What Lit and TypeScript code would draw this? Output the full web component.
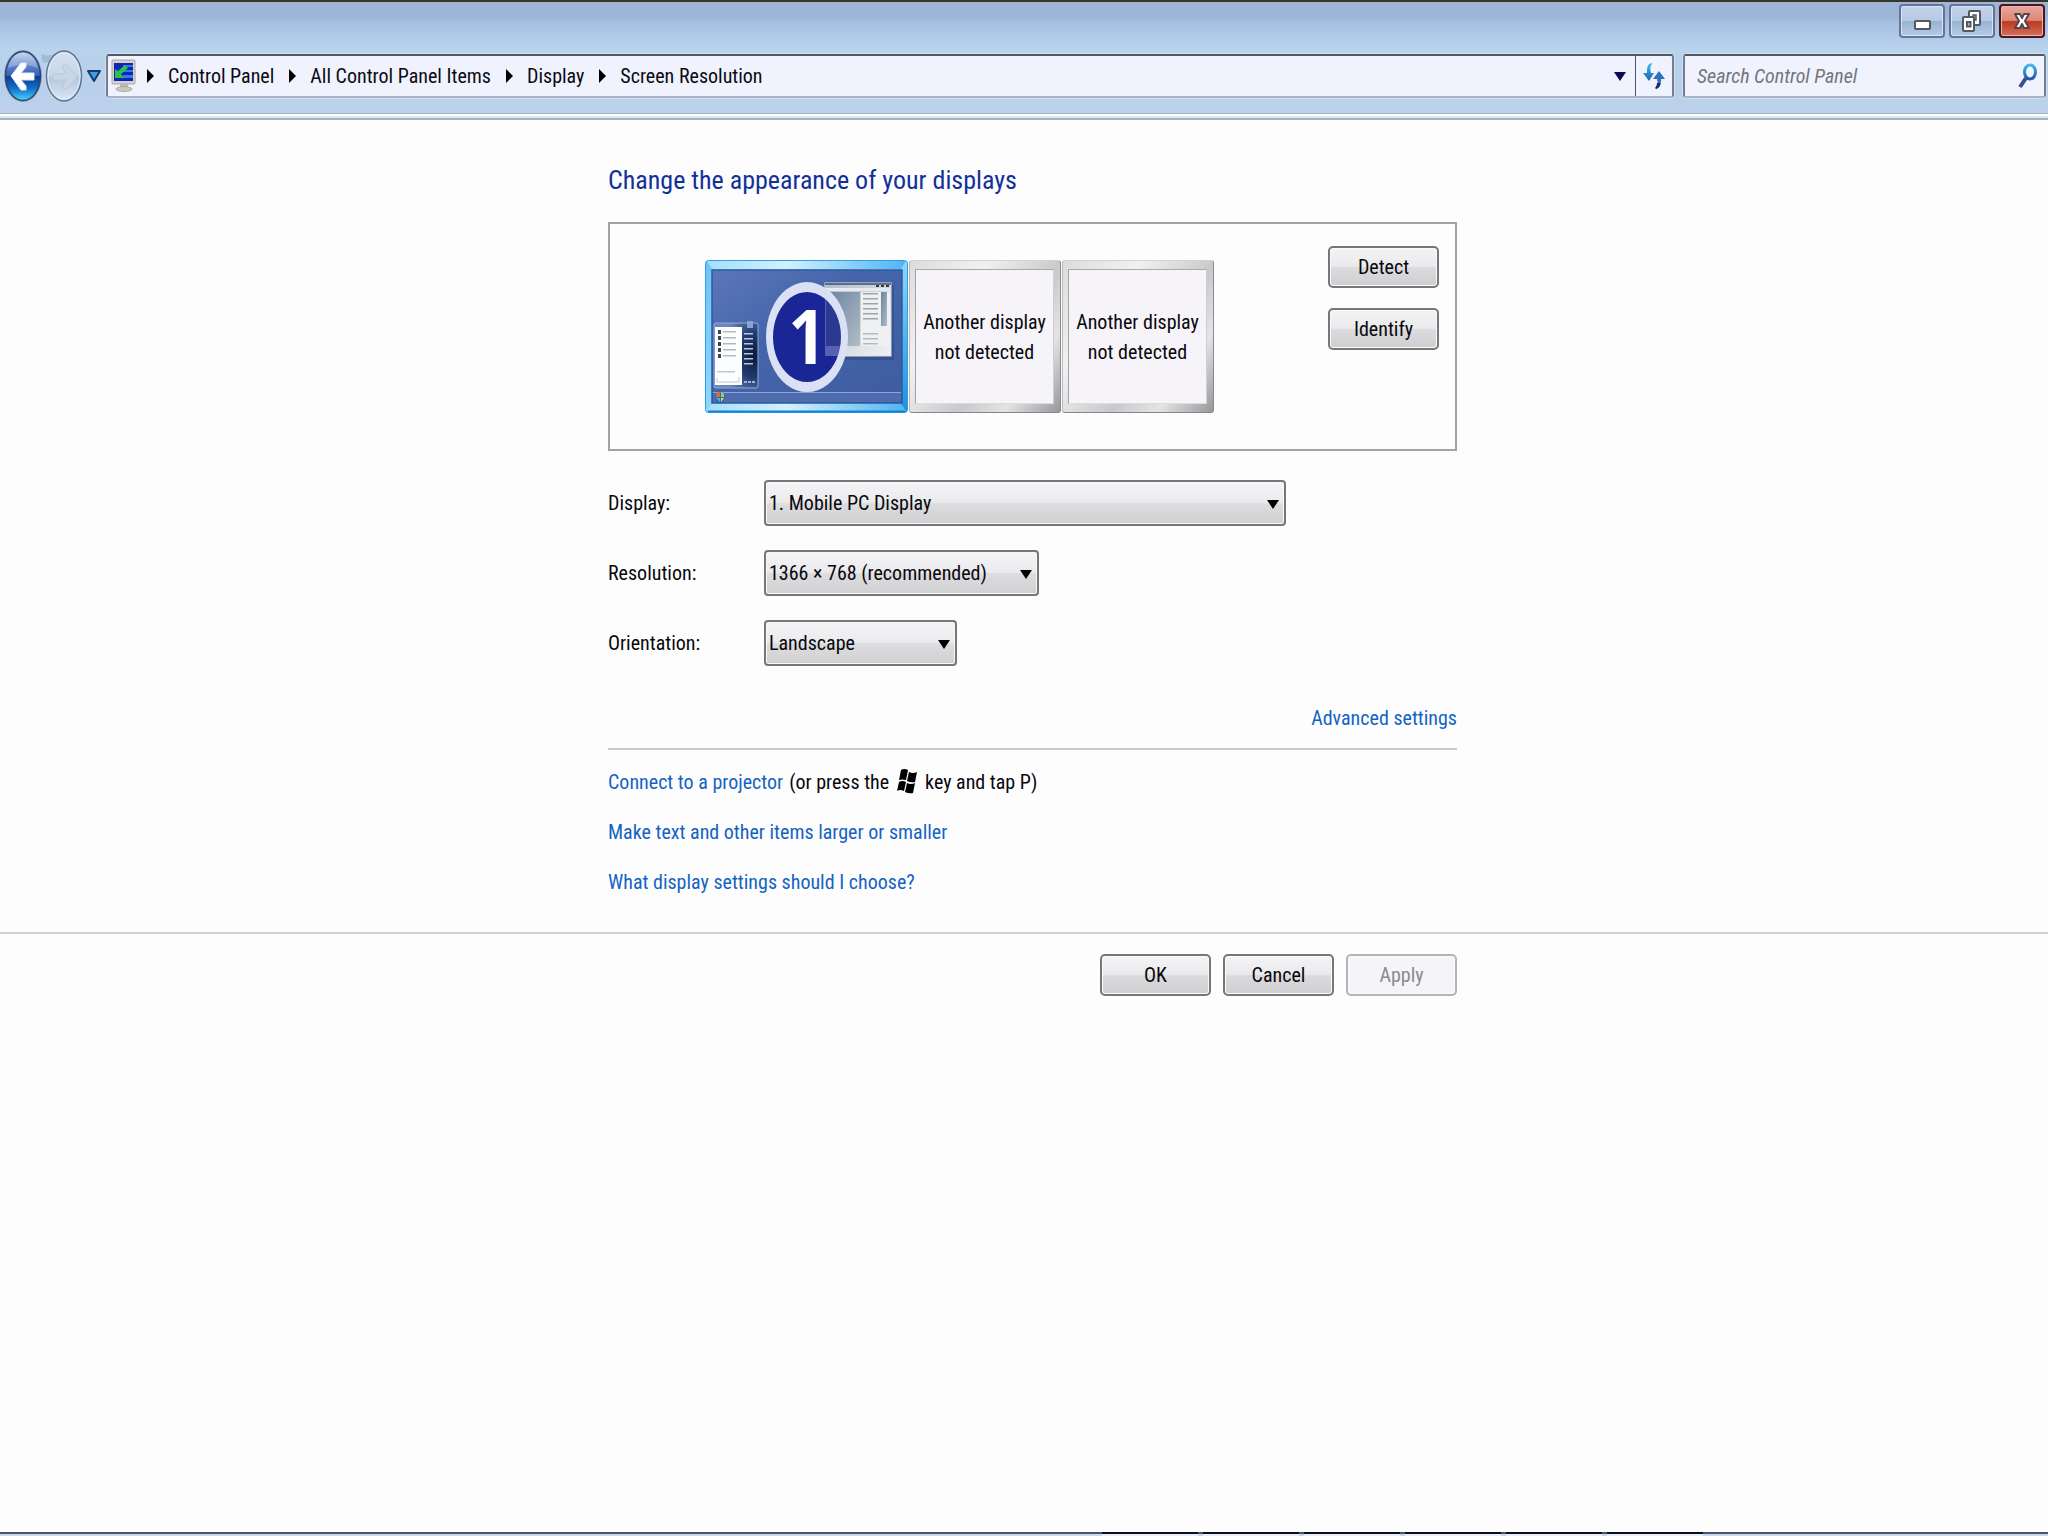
import { LitElement, html, css, svg } from "lit";
import { customElement } from "lit/decorators.js";

interface Choice {
  id: string;
  label: string;
  size: string;
  options: string[];
}

const CRUMBS = ["Control Panel", "All Control Panel Items", "Display", "Screen Resolution"];

const CHOICES: Choice[] = [
  { id: "display", label: "Display:", size: "wide", options: ["1. Mobile PC Display"] },
  { id: "resolution", label: "Resolution:", size: "medium", options: ["1366 × 768 (recommended)"] },
  { id: "orientation", label: "Orientation:", size: "small", options: ["Landscape"] },
];

const TASKS = [1, 2, 3, 4, 5, 6];

const base = css`
  * {
    box-sizing: border-box;
  }
  button,
  input,
  select {
    margin: 0;
    font: inherit;
    color: inherit;
  }
  svg {
    display: block;
  }
`;

@customElement("window-header")
export class WindowHeader extends LitElement {
  static styles = [
    base,
    css`
      :host {
        display: block;
      }
      .frame {
        border-top: 2px solid #36362c;
        border-bottom: 1px solid #a4b2ce;
        background: linear-gradient(#9fb6d7 0, #9cb4d5 14px, #a6bfe1 20px, #b9d3ed 46px, #b9cfea 80px, #bdd1ed 110px);
      }
      .caption {
        display: flex;
        justify-content: flex-end;
        gap: 4px;
        padding: 2px 3px 0 0;
      }
      .cap {
        display: grid;
        place-items: center;
        width: 46px;
        height: 34px;
        padding: 0;
        border: 2px solid #64759b;
        border-radius: 4px;
        background: linear-gradient(#c3d3ea 0, #b6cae5 48%, #98b2d2 52%, #b4cde8 100%);
        box-shadow: inset 0 0 0 1px #d8e4f3;
      }
      .cap.close {
        border-color: #4c1520;
        background: linear-gradient(#e8a79d 0, #dc8677 48%, #bb3a20 52%, #d4705a 100%);
        box-shadow: inset 0 0 0 1px #ecb5ab;
      }
      .nav {
        display: flex;
        align-items: center;
        padding: 11px 2px 10px 3px;
      }
      .travel {
        display: flex;
        align-items: center;
        margin-right: 5px;
      }
      .travel button {
        padding: 0;
        border: 0;
        background: none;
      }
      .travel .back {
        margin-right: -2px;
      }
      .travel .recent {
        margin-left: 4px;
      }
      .field {
        display: flex;
        align-items: stretch;
        height: 44px;
        border: 2px solid #757d91;
        border-top-color: #525766;
        border-bottom-color: #aab3c8;
        border-radius: 3px;
        background: #f0f3fd;
        box-shadow: 0 0 0 1px #cfdef1;
      }
      .address {
        flex: 1;
        min-width: 0;
        margin-right: 9px;
      }
      .crumbs {
        display: flex;
        flex: 1;
        align-items: center;
        padding-left: 3px;
        font-size: 20px;
        line-height: 24px;
        white-space: nowrap;
      }
      .crumbs a {
        color: #0a0a14;
        text-decoration: none;
      }
      .sep {
        margin: 0 14px 0 15px;
      }
      .place + .sep {
        margin-left: 11px;
      }
      .drop,
      .refresh {
        display: grid;
        place-items: center;
        padding: 0;
        border: 0;
        background: none;
      }
      .drop {
        width: 30px;
      }
      .refresh {
        width: 37px;
        border-left: 1px solid #4f5566;
      }
      .search {
        width: 363px;
        align-items: center;
      }
      .search input {
        flex: 1;
        min-width: 0;
        height: 100%;
        padding: 0 0 0 12px;
        border: 0;
        outline: 0;
        background: none;
        font-size: 20px;
      }
      .search input::placeholder {
        color: #73757d;
        font-style: italic;
        opacity: 1;
      }
      .go {
        padding: 0 6px 0 0;
        border: 0;
        background: none;
      }
      .edge {
        height: 6px;
        border-top: 2px solid #fff;
        border-bottom: 2px solid #a5b2c4;
        background: #d9e7f1;
      }
    `,
  ];

  private minimizeIcon() {
    return svg`<svg width="20" height="20" viewBox="0 0 20 20" aria-hidden="true">
      <rect x="3" y="10" width="15" height="8" rx="1" fill="#fff" stroke="#545861" stroke-width="2"/></svg>`;
  }

  private restoreIcon() {
    return svg`<svg width="22" height="24" viewBox="0 0 22 24" aria-hidden="true">
      <rect x="8" y="2" width="11" height="14" rx="1" fill="#fff" stroke="#545861" stroke-width="2"/>
      <rect x="12" y="6" width="3" height="5" fill="#a5bbd8" stroke="#545861" stroke-width="1.5"/>
      <rect x="2" y="8" width="11" height="14" rx="1" fill="#fff" stroke="#545861" stroke-width="2"/>
      <rect x="6" y="13" width="3.500" height="4.500" fill="#a5bbd8" stroke="#545861" stroke-width="2"/></svg>`;
  }

  private closeIcon() {
    return svg`<svg width="20" height="22" viewBox="0 0 20 22" aria-hidden="true">
      <path d="M3 4h5l2 4 2-4h5l-4 7 4 7h-5l-2-4-2 4H3l4-7z" fill="#fff" stroke="#58444c" stroke-width="2" stroke-linejoin="round"/></svg>`;
  }

  private backIcon() {
    return svg`<svg width="40" height="54" viewBox="0 0 40 54" aria-hidden="true">
      <defs>
        <linearGradient id="b1" x1="0" y1="0" x2="0" y2="1">
          <stop offset="0" stop-color="#b9cdec"/><stop offset=".2" stop-color="#6f93d2"/>
          <stop offset=".49" stop-color="#3460b5"/><stop offset=".51" stop-color="#0c3a93"/>
          <stop offset=".75" stop-color="#0f6fc9"/><stop offset="1" stop-color="#4fd3fb"/>
        </linearGradient>
      </defs>
      <ellipse cx="20" cy="27" rx="19" ry="26" fill="#8ea4c2"/>
      <ellipse cx="20" cy="27" rx="17.500" ry="24.500" fill="url(#b1)" stroke="#2b4672" stroke-width="1.500"/>
      <path d="M5 19C8 7 14 4 20 4s12 3 15 15c-9-4-21-4-30 0z" fill="#fff" opacity=".28"/>
      <path d="M8 27L18 14h5v4l-5 6h13v7H18l5 6v4h-5z" fill="#fff" stroke="#dfe9f7" stroke-width="1"/></svg>`;
  }

  private forwardIcon() {
    return svg`<svg width="42" height="54" viewBox="0 0 42 54" aria-hidden="true">
      <defs>
        <linearGradient id="f1" x1="0" y1="0" x2="0" y2="1">
          <stop offset="0" stop-color="#d3e0f0"/><stop offset=".48" stop-color="#c9d8ea"/>
          <stop offset=".54" stop-color="#b3c7de"/><stop offset="1" stop-color="#d9e8f6"/>
        </linearGradient>
      </defs>
      <path d="M0 5q6 3 14 0v6q-6 3-12 3z" fill="#a3b9d6"/>
      <ellipse cx="23" cy="27" rx="17.500" ry="25" fill="url(#f1)" stroke="#5f738f" stroke-width="1.500"/>
      <ellipse cx="23" cy="27" rx="16" ry="23" fill="none" stroke="#e4eef8" stroke-width="1"/>
      <path d="M36 28L26 16h-4v4l4 5H12v6h14l-4 5v4h4z" fill="#cbd6e4" stroke="#bac8da" stroke-width="1"/></svg>`;
  }

  private displayIcon() {
    return svg`<svg class="place" width="25" height="34" viewBox="0 0 25 34" aria-hidden="true">
      <rect x="1" y="1" width="23" height="24" rx="1" fill="#d5d2cc" stroke="#aaa79f"/>
      <rect x="3" y="4" width="19" height="18" fill="#1026b8"/>
      <path d="M12 6h10v2H12zM10 11h12v2H10zM12 16h10v3H12z" fill="#2f7be8"/>
      <path d="M14 6l3 3-7 6 3 4H4V10l3 2z" fill="#2fc24a"/>
      <path d="M9 25h8v4h-8z" fill="#bdbab2"/><ellipse cx="13" cy="30" rx="8" ry="2.500" fill="#c9c6be" stroke="#a09d95" stroke-width=".7"/></svg>`;
  }

  private arrow() {
    return svg`<svg class="sep" width="7" height="14" viewBox="0 0 7 14" aria-hidden="true"><path d="M0 0l7 7-7 7z" fill="#000"/></svg>`;
  }

  render() {
    return html`
      <header>
        <div class="frame">
          <div class="caption">
            <button class="cap" type="button" aria-label="Minimize">${this.minimizeIcon()}</button>
            <button class="cap" type="button" aria-label="Restore">${this.restoreIcon()}</button>
            <button class="cap close" type="button" aria-label="Close">${this.closeIcon()}</button>
          </div>
          <div class="nav">
            <div class="travel">
              <button class="back" type="button" aria-label="Back">${this.backIcon()}</button>
              <button type="button" aria-label="Forward">${this.forwardIcon()}</button>
              <button class="recent" type="button" aria-label="Recent pages">
                <svg width="14" height="13" viewBox="0 0 14 13" aria-hidden="true">
                  <path d="M1 1h12L7 11z" fill="#3fa0dc" stroke="#153a70" stroke-width="2" stroke-linejoin="round" />
                </svg>
              </button>
            </div>
            <div class="field address">
              <nav class="crumbs" aria-label="Address">
                ${this.displayIcon()}
                ${CRUMBS.map((name) => html`${this.arrow()}<a href="#">${name}</a>`)}
              </nav>
              <button class="drop" type="button" aria-label="Previous locations">
                <svg width="12" height="9" viewBox="0 0 12 9" aria-hidden="true"><path d="M0 0h12L6 9z" fill="#0a0a55" /></svg>
              </button>
              <button class="refresh" type="button" aria-label="Refresh">
                <svg width="22" height="28" viewBox="0 0 22 28" aria-hidden="true">
                  <defs>
                    <linearGradient id="r1" x1="0" y1="0" x2="0" y2="1">
                      <stop offset="0" stop-color="#35c3ee" /><stop offset="1" stop-color="#2660ae" />
                    </linearGradient>
                  </defs>
                  <path d="M9 1C4 2 4 6 4 11H0l6 8 5-8H8C7 7 7 4 9 2z" fill="url(#r1)" />
                  <path d="M13 27c4-1 5-4 5-10h4l-6-8-6 8h4c1 4 1 7-1 9z" fill="#2f70ba" />
                  <path d="M13 27c3-1 4-3 4.500-6H14c0 2-1 4-2 5z" fill="#1b2766" />
                </svg>
              </button>
            </div>
            <div class="field search">
              <input type="text" aria-label="Search Control Panel" placeholder="Search Control Panel" />
              <button class="go" type="button" aria-label="Search">
                <svg width="20" height="28" viewBox="0 0 20 28" aria-hidden="true">
                  <defs>
                    <linearGradient id="s1" x1="0" y1="0" x2="0" y2="1">
                      <stop offset="0" stop-color="#3db9e8" /><stop offset="1" stop-color="#2a55a8" />
                    </linearGradient>
                  </defs>
                  <path d="M8 16L2 25" stroke="#3a4f92" stroke-width="4" />
                  <ellipse cx="12" cy="10" rx="5.500" ry="7" fill="#edf5fd" stroke="url(#s1)" stroke-width="3" />
                </svg>
              </button>
            </div>
          </div>
        </div>
        <div class="edge"></div>
      </header>
    `;
  }
}

@customElement("display-preview")
export class DisplayPreview extends LitElement {
  static styles = [
    base,
    css`
      :host {
        display: block;
      }
      .stage {
        display: flex;
        justify-content: space-between;
        align-items: flex-start;
        min-height: 229px;
        padding: 22px 16px 36px 95px;
        border: 2px solid #a2a2a7;
      }
      .monitors {
        display: flex;
        align-items: flex-start;
        gap: 1px;
        padding-top: 14px;
      }
      .monitor {
        height: 153px;
        padding: 0;
        border-radius: 3px;
      }
      .primary {
        width: 203px;
        border: 0;
        background: none;
      }
      .missing {
        display: grid;
        width: 152px;
        padding: 8px 6px 8px 5px;
        border: 1px solid;
        border-color: #d2d2d3 #8a8a8c #858587 #b9b9bb;
        background: linear-gradient(125deg, #dcdcdd 0, #f1f1f2 30%, #c9c9cb 60%, #e4e4e5 78%, #98989b 100%);
      }
      .panel {
        display: grid;
        place-items: center;
        border: 1px solid;
        border-color: #a9a8ac #cfced2 #dddce0 #a3a2a6;
        background: #f6f4f9;
        font-size: 20px;
        line-height: 30px;
        text-align: center;
        white-space: nowrap;
      }
      .actions {
        display: flex;
        flex-direction: column;
        gap: 20px;
      }
    `,
  ];

  private screen() {
    const rows = [0, 1, 2, 3, 4];
    return svg`<svg width="203" height="153" viewBox="0 0 203 153" role="img" aria-label="Display 1">
      <defs>
        <linearGradient id="bz" x1="0" y1="0" x2="1" y2="1">
          <stop offset="0" stop-color="#6fc3f8"/><stop offset=".5" stop-color="#8ed6fd"/><stop offset="1" stop-color="#1a8fe0"/>
        </linearGradient>
        <linearGradient id="bt" x1="0" y1="0" x2="1" y2="0">
          <stop offset="0" stop-color="#a5defd"/><stop offset=".4" stop-color="#d3f0fe"/><stop offset="1" stop-color="#4fb4f3"/>
        </linearGradient>
        <linearGradient id="dk" x1="0" y1="0" x2="1" y2="1">
          <stop offset="0" stop-color="#5b77b8"/><stop offset=".4" stop-color="#4565ab"/><stop offset="1" stop-color="#3f5c9f"/>
        </linearGradient>
        <linearGradient id="wn" x1="0" y1="0" x2="1" y2="1">
          <stop offset="0" stop-color="#b2bccb"/><stop offset="1" stop-color="#f1f2f3"/>
        </linearGradient>
        <linearGradient id="pc" x1="0" y1="0" x2="1" y2="1">
          <stop offset="0" stop-color="#6b829f"/><stop offset="1" stop-color="#b1bdc6"/>
        </linearGradient>
        <radialGradient id="mn" cx=".9" cy=".5" r=".7">
          <stop offset="0" stop-color="#0c1836"/><stop offset=".5" stop-color="#213c73"/><stop offset="1" stop-color="#6b86bd"/>
        </radialGradient>
        <clipPath id="in"><ellipse cx="102" cy="77" rx="36" ry="47"/></clipPath>
      </defs>
      <rect x=".5" y=".5" width="202" height="152" rx="3" fill="url(#bz)" stroke="#2b9fe8"/>
      <path d="M2 1h199l-5 8H7z" fill="url(#bt)"/>
      <path d="M2 151h199l-5-8H7z" fill="url(#bt)"/>
      <path d="M3 151.500h197" stroke="#1583d2" stroke-width="2"/>
      <rect x="7" y="10" width="190" height="133" fill="url(#dk)" stroke="#2b5c9c" stroke-width="1.500"/>
      <path d="M8 133h188v9H8z" fill="#4f6cae"/><path d="M8 132.500h188" stroke="#90a5d0"/>
      <circle cx="15" cy="137.500" r="5" fill="#2c6fb0"/>
      <path d="M11 134l4-2v5h-4z" fill="#e0672e"/><path d="M16 132l3 2v3h-3z" fill="#9fd15b"/>
      <path d="M11 138h4v4z" fill="#4bb4e6"/><path d="M16 138h3l-3 4z" fill="#f4cf45"/>
      <rect x="9" y="63" width="44" height="65" rx="2" fill="url(#mn)" stroke="#93a9d4"/>
      <rect x="10" y="67" width="27" height="58" fill="#fcfdff"/>
      <rect x="42" y="61" width="6" height="7" fill="#8ca3cf"/>
      ${rows.map((i) => svg`<rect x="13" y="${70 + i * 6}" width="3" height="4" fill="#3d4450"/><rect x="18" y="${71 + i * 6}" width="13" height="1.500" fill="#b4b8be"/>`)}
      ${[0, 1, 2, 3, 4, 5, 6].map((i) => svg`<rect x="39" y="${73 + i * 5}" width="9" height="1.500" fill="#b9c6de"/>`)}
      <rect x="12" y="111" width="18" height="1.500" fill="#c5c7ca"/><path d="M12 118v4h22v-5" fill="none" stroke="#c5c7ca"/>
      <path d="M39 122h11" stroke="#a3b4d3" stroke-width="2" stroke-dasharray="3 1"/>
      <rect x="122" y="25" width="67" height="75" fill="#20386d" opacity=".35"/>
      <rect x="120" y="23" width="66" height="73" fill="url(#wn)" stroke="#dce1e9"/>
      <path d="M120 24h66" stroke="#3f4d66" stroke-width="1.500"/>
      <path d="M171 25h3v2h-3zM176 25h3v2h-3zM181 25h3v2h-3z" fill="#2f394c"/>
      <path d="M121 28h64v3h-64z" fill="#e7ebf1"/>
      <rect x="121" y="32" width="34" height="54" fill="url(#pc)"/>
      <rect x="156" y="32" width="29" height="54" fill="#eef0f2"/>
      ${[0, 1, 2, 3, 4, 5].map((i) => svg`<rect x="158" y="${33 + i * 5}" width="15" height="1.500" fill="#9ea3a9"/>`)}
      ${[0, 1, 2].map((i) => svg`<rect x="158" y="${73 + i * 5}" width="15" height="1.500" fill="#b6babf"/>`)}
      <rect x="176" y="32" width="6" height="34" fill="url(#pc)"/>
      <ellipse cx="102" cy="77" rx="35" ry="47" fill="#1b2696"/>
      <g clip-path="url(#in)" opacity=".3">
        <rect x="120" y="23" width="40" height="73" fill="#e6ecf6"/><rect x="121" y="32" width="34" height="54" fill="#55698a"/>
      </g>
      <path fill-rule="evenodd" d="M102 22a41 55 0 1 0 .01 0zM102 32a34 45 0 1 1-.01 0z" fill="#dbe1f4"/>
      <text x="101" y="104" text-anchor="middle" font-family="Open Sans Condensed, Roboto Condensed, sans-serif" font-weight="700" font-size="76" fill="#fff">1</text>
    </svg>`;
  }

  render() {
    return html`
      <section class="stage" aria-label="Detected displays">
        <div class="monitors">
          <button class="monitor primary" type="button">${this.screen()}</button>
          ${[0, 1].map(() => html`<div class="monitor missing"><div class="panel"><span>Another display<br />not detected</span></div></div>`)}
        </div>
        <div class="actions">
          <push-button label="Detect"></push-button>
          <push-button label="Identify"></push-button>
        </div>
      </section>
    `;
  }
}

@customElement("push-button")
export class PushButton extends LitElement {
  static properties = { label: { type: String }, disabled: { type: Boolean } };
  declare label: string;
  declare disabled: boolean;

  static styles = [
    base,
    css`
      :host {
        display: block;
      }
      .push {
        display: block;
        width: 111px;
        height: 42px;
        padding: 0;
        border: 2px solid #77777a;
        border-radius: 5px;
        background: linear-gradient(#f4f3f5 0, #eaeaec 48%, #dbdadc 52%, #cfced1 100%);
        box-shadow: inset 0 0 0 1px #fafafa;
        font-size: 20px;
        line-height: 24px;
        text-align: center;
      }
      .push:disabled {
        border-color: #b4b4b8;
        background: #f5f4f6;
        color: #8b8b8f;
      }
    `,
  ];

  render() {
    return html`<button class="push" type="button" ?disabled=${this.disabled}>${this.label}</button>`;
  }
}

@customElement("app-root")
export class AppRoot extends LitElement {
  static styles = [
    base,
    css`
      :host {
        display: flex;
        flex-direction: column;
        min-height: 100vh;
        background: #fdfdfe;
        color: #08080c;
        font-family: "Roboto Condensed", Roboto, "Noto Sans", sans-serif;
        font-size: 20px;
        line-height: 24px;
      }
      main {
        flex: 1;
      }
      .column {
        width: 100%;
        max-width: 849px;
        margin: 0 auto;
      }
      .shift {
        padding-left: 17px;
      }
      h1 {
        margin: 0;
        padding: 44px 0 26px;
        color: #12309a;
        font-size: 26px;
        font-weight: 400;
        line-height: 32px;
      }
      .form {
        display: grid;
        grid-template-columns: 156px 1fr;
        align-items: center;
        row-gap: 24px;
        padding-top: 29px;
      }
      .pick {
        position: relative;
        height: 46px;
      }
      .pick.wide {
        width: 522px;
      }
      .pick.medium {
        width: 275px;
      }
      .pick.small {
        width: 193px;
      }
      .pick select {
        display: block;
        width: 100%;
        height: 100%;
        padding: 0 24px 0 3px;
        border: 2px solid #77777a;
        border-radius: 4px;
        appearance: none;
        background: linear-gradient(#f5f4f6 0, #ebeaec 48%, #dddcdf 52%, #d0cfd2 100%);
        box-shadow: inset 0 0 0 1px #f8f8f9;
      }
      .pick svg {
        position: absolute;
        top: 20px;
        right: 7px;
        pointer-events: none;
      }
      a {
        color: #1463c4;
        text-decoration: none;
      }
      .advanced {
        margin: 0;
        padding: 40px 0 18px;
        border-bottom: 2px solid #c9c9cd;
        text-align: right;
      }
      .links {
        display: flex;
        flex-direction: column;
        gap: 26px;
        margin: 0;
        padding: 20px 0 38px;
        list-style: none;
      }
      .links li {
        display: flex;
        align-items: center;
        gap: 6px;
      }
      .links svg {
        margin: -2px 2px 0;
      }
      .commands {
        border-top: 2px solid #cfced3;
        padding-top: 20px;
      }
      .commands .row {
        display: flex;
        justify-content: flex-end;
        gap: 12px;
      }
      .taskbar {
        display: flex;
        justify-content: flex-end;
        gap: 5px;
        height: 4px;
        padding-right: 345px;
        background: linear-gradient(#4d5268 0, #4d5268 2px, #c9d8ee 2px);
      }
      .task {
        width: 96px;
        background: linear-gradient(#0d0f16 0, #0d0f16 2px, #e9eef7 2px);
      }
    `,
  ];

  render() {
    return html`
      <window-header></window-header>
      <main>
        <div class="shift">
          <div class="column">
            <h1>Change the appearance of your displays</h1>
            <display-preview></display-preview>
            <form class="form">
              ${CHOICES.map(
                (c) => html`
                  <label for=${c.id}>${c.label}</label>
                  <div class="pick ${c.size}">
                    <select id=${c.id}>
                      ${c.options.map((o) => html`<option>${o}</option>`)}
                    </select>
                    <svg width="12" height="9" viewBox="0 0 12 9" aria-hidden="true"><path d="M0 0h12L6 9z" fill="#000" /></svg>
                  </div>
                `
              )}
            </form>
            <p class="advanced"><a href="#">Advanced settings</a></p>
            <ul class="links">
              <li>
                <a href="#">Connect to a projector</a>
                <span>(or press the</span>
                <svg width="20" height="26" viewBox="0 0 20 26" role="img" aria-label="Windows">
                  <path d="M4 2Q7 0 11 2L9 12Q5 11 2 12z" fill="#000" />
                  <path d="M12 4Q16 6 20 4L18 14Q14 15 10 13z" fill="#000" />
                  <path d="M2 14Q5 12 9 14L7 23Q3 21 0 23z" fill="#000" />
                  <path d="M10 15Q14 17 18 15L16 25Q12 26 8 24z" fill="#000" />
                </svg>
                <span>key and tap P)</span>
              </li>
              <li><a href="#">Make text and other items larger or smaller</a></li>
              <li><a href="#">What display settings should I choose?</a></li>
            </ul>
          </div>
        </div>
        <div class="commands">
          <div class="shift">
            <div class="column row">
              <push-button label="OK"></push-button>
              <push-button label="Cancel"></push-button>
              <push-button label="Apply" disabled></push-button>
            </div>
          </div>
        </div>
      </main>
      <footer class="taskbar">${TASKS.map(() => html`<div class="task"></div>`)}</footer>
    `;
  }
}
